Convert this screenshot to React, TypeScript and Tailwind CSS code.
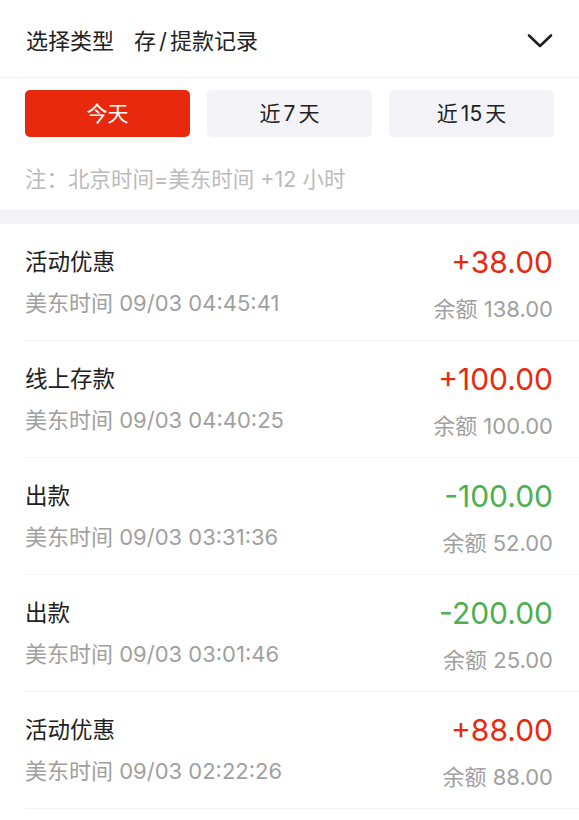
import React from "react";

const rows = [
  { title: "活动优惠", time: "美东时间 09/03 04:45:41", amount: "+38.00", bal: "余额 138.00", pos: true },
  { title: "线上存款", time: "美东时间 09/03 04:40:25", amount: "+100.00", bal: "余额 100.00", pos: true },
  { title: "出款", time: "美东时间 09/03 03:31:36", amount: "-100.00", bal: "余额 52.00", pos: false },
  { title: "出款", time: "美东时间 09/03 03:01:46", amount: "-200.00", bal: "余额 25.00", pos: false },
  { title: "活动优惠", time: "美东时间 09/03 02:22:26", amount: "+88.00", bal: "余额 88.00", pos: true },
];

export default function App() {
  return (
    <div
      className="w-[579px] min-h-[820px] bg-white"
      style={{ fontFamily: 'Inter, "Noto Sans CJK SC", sans-serif' }}
    >
      <div className="h-[78px] flex items-center justify-between pl-[26px] pr-[26px] pt-[5px] border-b border-[#f0f0f2]">
        <div className="text-[22px] text-[#222] flex gap-[20px]">
          <span>选择类型</span>
          <span>
            存<span className="mx-[3px]">/</span>提款记录
          </span>
        </div>
        <svg width="26" height="16" viewBox="0 0 26 16" fill="none">
          <path d="M2 2.5 L13 13 L24 2.5" stroke="#1f1f1f" strokeWidth="2.6" strokeLinecap="round" strokeLinejoin="round" />
        </svg>
      </div>
      <div className="px-[25px] pt-[12px] pb-[17px]">
        <div className="grid grid-cols-3 gap-[17px]">
          <div className="h-[47px] rounded-[5px] bg-[#e8290e] text-white text-[21px] flex items-center justify-center">今天</div>
          <div className="h-[47px] rounded-[5px] bg-[#f3f3f7] text-[#222] text-[21px] flex items-center justify-center">
            近<span className="mx-[3px]">7</span>天
          </div>
          <div className="h-[47px] rounded-[5px] bg-[#f3f3f7] text-[#222] text-[21px] flex items-center justify-center">
            近<span className="mx-[3px]">15</span>天
          </div>
        </div>
        <div className="mt-[28px] h-[28px] leading-[28px] text-[21.5px] text-[#bbbbbb]">注：北京时间=美东时间 +12 小时</div>
      </div>
      <div className="h-[14px] bg-[#f3f3f7]" />
      {rows.map((r, i) => (
        <div key={i} className="ml-[25px] h-[117px] border-b border-[#f2f2f4] pr-[26px] flex justify-between">
          <div className="flex flex-col pt-[24px]">
            <div className="h-[28px] leading-[28px] text-[22.5px] text-[#222]">{r.title}</div>
            <div className="mt-[13px] h-[28px] leading-[28px] text-[22px] text-[#a0a0a0]">{r.time}</div>
          </div>
          <div className="flex flex-col items-end pt-[20px]">
            <div className={`h-[36px] leading-[36px] text-[30px] ${r.pos ? "text-[#e8290e]" : "text-[#4caf50]"}`}>{r.amount}</div>
            <div className="mt-[15px] h-[28px] leading-[28px] text-[22px] text-[#a0a0a0]">{r.bal}</div>
          </div>
        </div>
      ))}
    </div>
  );
}
